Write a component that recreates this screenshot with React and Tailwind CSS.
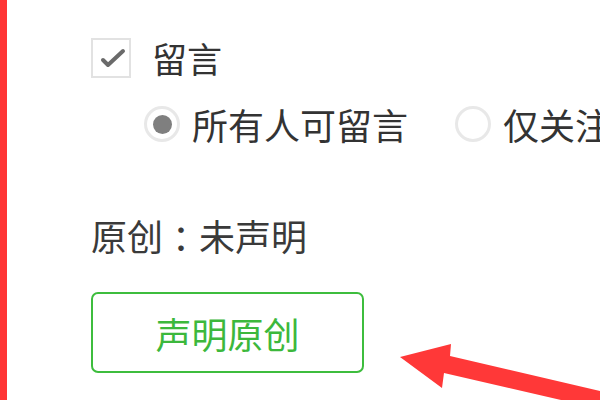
export default function App() {
  const font = { fontFamily: '"Noto Sans CJK SC", "Microsoft YaHei", sans-serif' };
  return (
    <div className="relative w-[600px] h-[400px] overflow-hidden bg-white flex" style={font}>
      <div className="w-[7px] h-full bg-[#ff3535] shrink-0" />
      <div className="pl-[84px] pt-[38px] flex flex-col">
        <div className="flex items-center h-[40px]">
          <div className="w-[40px] h-[40px] border-2 border-[#e2e2e2] flex items-center justify-center">
            <svg width="30" height="30" viewBox="0 0 30 30">
              <path d="M8 22 L13 27 L28 13" transform="translate(-1,-5)" fill="none" stroke="#6a6a6a" strokeWidth="4" strokeLinecap="round" strokeLinejoin="round" />
            </svg>
          </div>
          <span className="ml-[21px] text-[35px] leading-[40px] text-[#333]">留言</span>
        </div>
        <div className="flex items-center mt-[28px] pl-[53px] h-[36px]">
          <div className="w-[36px] h-[36px] rounded-full border-[3px] border-[#e8e8e8] flex items-center justify-center shrink-0">
            <div className="w-[19px] h-[19px] rounded-full bg-[#7f7f7f]" />
          </div>
          <span className="ml-[12px] text-[36px] leading-[40px] text-[#333] whitespace-nowrap">所有人可留言</span>
          <div className="ml-[47px] w-[36px] h-[36px] rounded-full border-[3px] border-[#e8e8e8] shrink-0" />
          <span className="ml-[12px] text-[36px] leading-[40px] text-[#333] whitespace-nowrap">仅关注者可留言</span>
        </div>
        <div className="mt-[73px] text-[36px] leading-[40px] text-[#3a3a3a] whitespace-nowrap flex">
          <span>原创</span>
          <span className="w-[36px] shrink-0 text-center [font-feature-settings:'halt']">：</span>
          <span>未声明</span>
        </div>
        <div className="mt-[37px] w-[273px] h-[81px] border-2 border-[#3dbd3d] rounded-[7px] flex items-center justify-center">
          <span className="text-[36px] leading-[40px] text-[#3cb83c]">声明原创</span>
        </div>
      </div>
      <svg className="absolute left-0 top-0" width="600" height="400" viewBox="0 0 600 400">
        <polygon points="400,357 451,344 450,356 600,391 600,409 444,373 442,388" fill="#ff3838" />
      </svg>
    </div>
  );
}
